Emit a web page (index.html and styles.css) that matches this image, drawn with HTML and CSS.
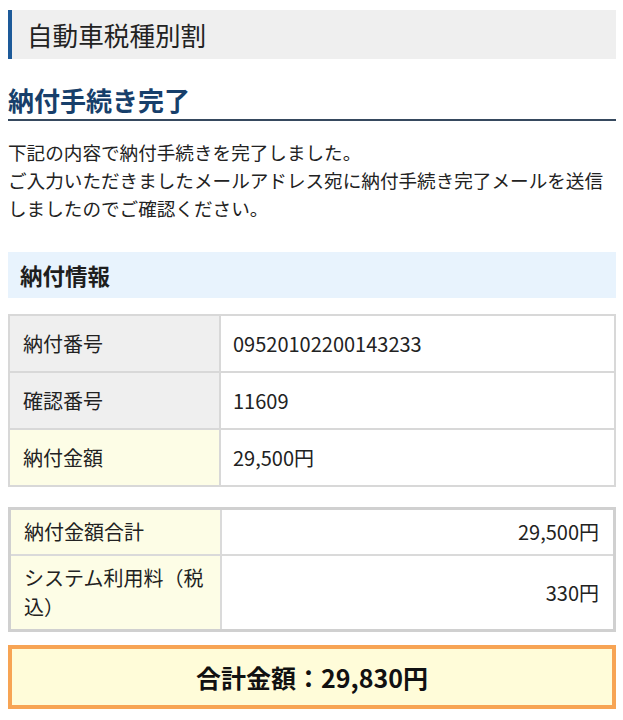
FILE: index.html
```html
<!DOCTYPE html>
<html lang="ja">
<head>
<meta charset="utf-8">
<title>自動車税種別割</title>
<link rel="stylesheet" href="styles.css">
</head>
<body>
<div class="page">
  <div class="title-bar">自動車税種別割</div>
  <h1 class="heading">納付手続き完了</h1>
  <p class="lead">下記の内容で納付手続きを完了しました。<br>ご入力いただきましたメールアドレス宛に納付手続き完了メールを送信しましたのでご確認ください。</p>
  <h2 class="section">納付情報</h2>
  <table class="info">
    <tr><th class="gray">納付番号</th><td>09520102200143233</td></tr>
    <tr><th class="gray">確認番号</th><td>11609</td></tr>
    <tr><th class="yellow">納付金額</th><td>29,500円</td></tr>
  </table>
  <table class="sum">
    <tr><th>納付金額合計</th><td>29,500円</td></tr>
    <tr><th>システム利用料（税込）</th><td>330円</td></tr>
  </table>
  <div class="total">合計金額：29,830円</div>
</div>
</body>
</html>
```
FILE: styles.css
```css
html, body {
  margin: 0;
  padding: 0;
  background: #ffffff;
}
body {
  font-family: "Noto Sans CJK JP", "Noto Sans", sans-serif;
  color: #222222;
}
.page {
  margin: 0 7px 0 8px;
  padding-top: 10px;
}
.title-bar {
  background: #efefef;
  border-left: 4px solid #1d5a99;
  height: 49px;
  line-height: 49px;
  padding-left: 15px;
  font-size: 25.6px;
  color: #222222;
}
.heading {
  margin: 23px 0 0 0;
  font-size: 26px;
  line-height: 36px;
  font-weight: 700;
  color: #173f6b;
  padding-bottom: 1px;
  border-bottom: 2px solid #36495e;
}
.lead {
  margin: 17px 0 0 0;
  font-size: 18.6px;
  line-height: 28px;
  color: #222222;
}
.section {
  margin: 30px 0 0 0;
  background: #e8f3fd;
  height: 46px;
  line-height: 46px;
  padding-left: 12px;
  font-size: 22.5px;
  font-weight: 700;
  color: #1e1e1e;
}
table {
  width: 100%;
  border-collapse: collapse;
  font-size: 20px;
  line-height: 29px;
}
th, td {
  text-align: left;
  font-weight: 400;
  vertical-align: middle;
}
.info {
  margin-top: 16px;
  border: 2px solid #d6d6d6;
}
.info th, .info td {
  border: 2px solid #d8d8d8;
  padding: 13px 13px 13px 13px;
  height: 29px;
}
.info th {
  width: 183px;
}
.info td {
  background: #ffffff;
  padding-left: 12px;
}
.gray {
  background: #efefef;
}
.yellow {
  background: #fdfde6;
}
.sum {
  margin-top: 20px;
  border: 3px solid #d0d0d0;
}
.sum th, .sum td {
  border: 2px solid #dadada;
  padding: 7px 13px 8px 13px;
}
.sum th {
  width: 183px;
  background: #fdfde6;
}
.sum td {
  text-align: right;
  background: #ffffff;
  padding-right: 14px;
}
.sum tr:first-child th, .sum tr:first-child td {
  border-top: 3px solid #d0d0d0;
}
.sum tr:last-child th, .sum tr:last-child td {
  border-bottom: 3px solid #d0d0d0;
}
.total {
  margin-top: 13px;
  border: 4px solid #f7a454;
  background: #fffcd9;
  height: 56px;
  line-height: 56px;
  text-align: center;
  font-size: 25px;
  font-weight: 700;
  color: #111111;
}
```
